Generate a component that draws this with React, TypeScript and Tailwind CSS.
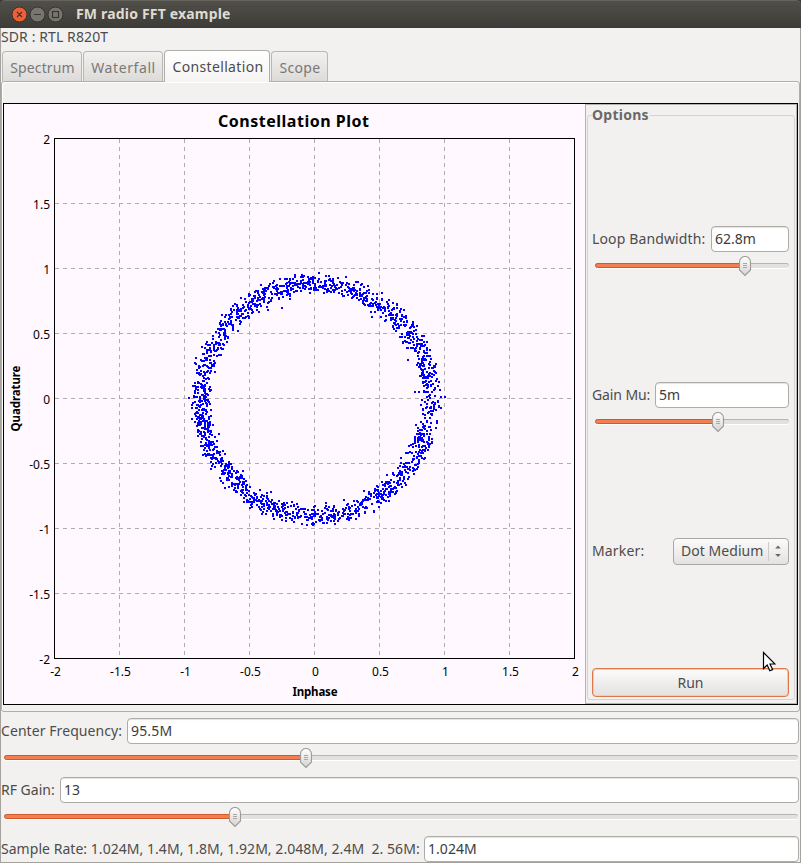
import type { ReactNode } from 'react';
import clsx from 'clsx';

// plot area inside the canvas, 130px per unit
const LEFT = 50.5;
const TOP = 34.5;
const SIZE = 520;
const STEP = 65;
const TICKS = [-2, -1.5, -1, -0.5, 0, 0.5, 1, 1.5, 2];

function random(seed: number) {
  let s = seed;
  return () => {
    s = (s + 0x6d2b79f5) | 0;
    let t = Math.imul(s ^ (s >>> 15), 1 | s);
    t = (t + Math.imul(t ^ (t >>> 7), 61 | t)) ^ t;
    return ((t ^ (t >>> 14)) >>> 0) / 4294967296;
  };
}

// constant envelope signal: a noisy ring with a few strays on the inside
function makeRing(count: number) {
  const rnd = random(820);
  let d = '';
  for (let i = 0; i < count; i++) {
    const a = rnd() * Math.PI * 2;
    const stray = rnd() < 0.08 ? rnd() * -9 : 0;
    const r = 115 + (rnd() * 1.3 + rnd() * 0.7 - 1) * 11.5 + stray;
    const x = Math.round(LEFT + SIZE / 2 + r * Math.cos(a));
    const y = Math.round(TOP + SIZE / 2 + r * Math.sin(a) * 1.01);
    d += `M${x} ${y}h2v2h-2z`;
  }
  return d;
}

const ring = makeRing(1850) + 'M440 292h2v2h-2zM436 292h2v2h-2zM184 293h2v2h-2zM316 392h0';

function Plot() {
  return (
    <svg width="581" height="600" className="block shrink-0 bg-[#fff9ff] font-['Noto_Sans',sans-serif]">
      <text x="289.5" y="23" textAnchor="middle" textLength="151" className="text-[16px] font-bold">
        Constellation Plot
      </text>
      <g stroke="#b0adb1" strokeDasharray="4 4" shapeRendering="crispEdges">
        {TICKS.slice(1, -1).map((v, i) => (
          <g key={v}>
            <path d={`M${LEFT + STEP * (i + 1)} ${TOP}v${SIZE}`} />
            <path d={`M${LEFT} ${TOP + STEP * (i + 1)}h${SIZE}`} />
          </g>
        ))}
      </g>
      <path d={ring} fill="#0000ff" shapeRendering="crispEdges" />
      <rect x={LEFT} y={TOP} width={SIZE} height={SIZE} fill="none" stroke="#000" shapeRendering="crispEdges" />
      <g className="text-[12px]">
        {TICKS.map((v, i) => (
          <g key={v}>
            <text x={LEFT + 1 + STEP * i} y="572" textAnchor="middle">
              {v}
            </text>
            <text x="46" y={TOP + SIZE + 5 - STEP * i} textAnchor="end">
              {v}
            </text>
          </g>
        ))}
      </g>
      <g className="text-[11.5px] font-bold">
        <text x="311" y="592" textAnchor="middle" textLength="45">
          Inphase
        </text>
        <text transform="translate(16 294.5) rotate(-90)" textAnchor="middle" textLength="66">
          Quadrature
        </text>
      </g>
    </svg>
  );
}

function Slider({ fill, className }: { fill: number; className?: string }) {
  return (
    <div className={clsx('relative flex h-5 items-center', className)}>
      <div className="mb-px flex h-[5px] w-full rounded-full border-t border-[#b7b5b2] bg-[#e2e1df] shadow-[0_1px_0_#fff]">
        <div
          className="-mt-px h-[5px] rounded-l-full border border-[#cf5a2b] bg-[#f57e4f]"
          style={{ width: fill }}
        />
      </div>
      <svg width="14" height="21" className="absolute top-0" style={{ left: fill - 7 }}>
        <defs>
          <linearGradient id="thumb" x2="0" y2="1">
            <stop offset="0" stopColor="#fff" />
            <stop offset="1" stopColor="#d5d3d1" />
          </linearGradient>
        </defs>
        <path
          d="M1.5 6a5.5 5.5 0 0 1 11 0v8L7 19.5L1.5 14z"
          fill="url(#thumb)"
          stroke="#9d9b98"
          strokeWidth="1.1"
        />
        <path d="M5 7.5h4M5 9.5h4M5 11.5h4" stroke="#aaa8a5" shapeRendering="crispEdges" />
      </svg>
    </div>
  );
}

function Entry({ value, className }: { value: string; className?: string }) {
  return (
    <div
      className={clsx(
        'flex items-center rounded-[4px] border border-[#aeaca9] bg-white pl-[3px] text-[#3c3c3c] shadow-[inset_0_1px_1px_#e4e3e2]',
        className,
      )}>
      {value}
    </div>
  );
}

function Tab({ children, className }: { children: ReactNode; className: string }) {
  return (
    <div
      className={clsx(
        'flex h-[30px] items-center justify-center rounded-t-[4px] border border-b-0 border-[#b9b7b4] bg-linear-to-b from-[#f2f1f0] to-[#dddbd9] pt-[2px] pl-px text-[#7a7876]',
        className,
      )}>
      {children}
    </div>
  );
}

function TitleBar() {
  return (
    <header className="flex h-7 items-center rounded-t-[5px] border-t border-[#66645d] bg-linear-to-b from-[#504f49] to-[#3c3b37]">
      <svg width="66" height="27" className="shrink-0">
        <g stroke="#33322e">
          <circle cx="19.5" cy="13.5" r="7.5" fill="#ec6038" />
          <circle cx="37.5" cy="13.5" r="7.5" fill="#77756d" />
          <circle cx="55.5" cy="13.5" r="7.5" fill="#77756d" />
        </g>
        <g stroke="#393731" strokeWidth="1.2" fill="none">
          <path d="M17 11l5 5M22 11l-5 5M34 13.5h7" />
          <rect x="52.5" y="10.5" width="6" height="6" />
        </g>
      </svg>
      <span className="-mt-px ml-[10px] text-[14px] font-bold tracking-[0.18px] text-[#dfdbd2]">
        FM radio FFT example
      </span>
    </header>
  );
}

function Options() {
  return (
    <aside className="flex w-[212px] flex-col border border-[#b4b2af] bg-[#f2f1f0] pt-[10px] pr-[3px] pb-[3px] pl-px">
      <fieldset className="relative flex min-h-0 flex-1 flex-col rounded-[3px] border border-[#d5d3d1] pr-[5px] pl-[4px]">
        <h2 className="absolute top-[-11px] left-[4px] bg-[#f2f1f0] pr-[1px] text-[14px] font-bold tracking-[0.25px] text-[#6b6967]">
          Options
        </h2>
        <div className="mt-[110px] flex h-[26px] items-center justify-between">
          <span className="tracking-[0.13px]">Loop Bandwidth:</span>
          <Entry value="62.8m" className="h-[26px] w-[78px]" />
        </div>
        <Slider fill={150} className="mt-1 ml-[3px]" />
        <div className="mt-[106px] flex h-[26px] items-center justify-between">
          <span className="tracking-[-0.1px]">Gain Mu:</span>
          <Entry value="5m" className="h-[26px] w-[134px]" />
        </div>
        <Slider fill={123} className="mt-1 ml-[3px]" />
        <div className="mt-[105px] flex h-7 items-center justify-between">
          <span className="tracking-[0.15px]">Marker:</span>
          <button className="flex h-[27px] w-[116px] items-center rounded-[4px] border border-[#aaa8a5] bg-linear-to-b from-[#fbfbfa] to-[#e4e2e0] pl-[7px]">
            <span className="w-[87px] text-left tracking-[0.05px]">Dot Medium</span>
            <span className="h-[19px] w-px bg-[#cccac8]" />
            <svg width="8" height="14" className="ml-[5px]" fill="#6a6866">
              <path d="M1.2 4.5L4 1.5L6.8 4.5zM1.2 10L4 13L6.8 10z" />
            </svg>
          </button>
        </div>
        <button className="mt-[103px] h-[29px] w-[197px] rounded-[4px] border border-[#e2764b] bg-linear-to-b from-[#fcfcfc] to-[#e3e1df] shadow-[inset_0_0_0_1px_#f6cab8]">
          Run
        </button>
      </fieldset>
    </aside>
  );
}

export default function App() {
  return (
    <div className="relative h-[863px] w-[801px] bg-[#3c3b37] font-['Noto_Sans',sans-serif] text-[14px] leading-5 whitespace-nowrap text-[#4c4c4c]">
      <TitleBar />
      <main className="flex h-[835px] flex-col border-r border-b border-l border-[#a5a29d] bg-[#f2f1f0]">
        <div className="h-[22px] tracking-[0.1px]">
          <span className="relative -top-px">SDR : RTL R820T</span>
        </div>

        <nav className="flex h-[31px] items-end pl-px">
          <Tab className="mr-px w-[80px] tracking-[0.15px]">Spectrum</Tab>
          <Tab className="mr-px w-[80px] tracking-[0.6px]">Waterfall</Tab>
          <div className="z-10 -mb-px flex h-[32px] w-[106px] items-center justify-center rounded-t-[4px] border border-b-0 border-[#b0aeab] bg-linear-to-b from-white to-[#f5f4f3] pl-[2px] tracking-[0.35px]">
            Constellation
          </div>
          <Tab className="ml-px w-[57px] tracking-[0.35px]">Scope</Tab>
        </nav>

        <section className="h-[631px] rounded-[3px] border border-[#b0aeab] pt-[21px] pl-px shadow-[inset_1px_1px_0_#fff]">
          <div className="flex h-[602px] w-[795px] border border-black">
            <Plot />
            <Options />
          </div>
        </section>

        <div className="mt-[6px] flex h-[26px] items-center">
          <span className="w-[126px] tracking-[0.07px]">Center Frequency:</span>
          <Entry value="95.5M" className="h-[26px] w-[672px] tracking-[0.15px]" />
        </div>
        <Slider fill={302} className="mt-1 ml-[3px] w-[794px]" />
        <div className="mt-[9px] flex h-[26px] items-center">
          <span className="w-[59px]">RF Gain:</span>
          <Entry value="13" className="h-[26px] w-[739px]" />
        </div>
        <Slider fill={231} className="mt-1 ml-[3px] w-[794px]" />
        <div className="mt-[9px] flex h-[26px] items-center">
          <span className="w-[423px] tracking-[0.04px] whitespace-pre">
            Sample Rate: 1.024M, 1.4M, 1.8M, 1.92M, 2.048M, 2.4M  2. 56M:
          </span>
          <Entry value="1.024M" className="h-[26px] w-[375px] tracking-[0.05px]" />
        </div>
      </main>

      <svg width="14" height="22" className="absolute top-[651px] left-[762px]">
        <path
          d="M1.5 1.5v16l3.7-3.5l2.6 5.8l2.8-1.2l-2.6-5.6h5z"
          fill="#fff"
          stroke="#000"
          strokeWidth="1.2"
        />
      </svg>
    </div>
  );
}
